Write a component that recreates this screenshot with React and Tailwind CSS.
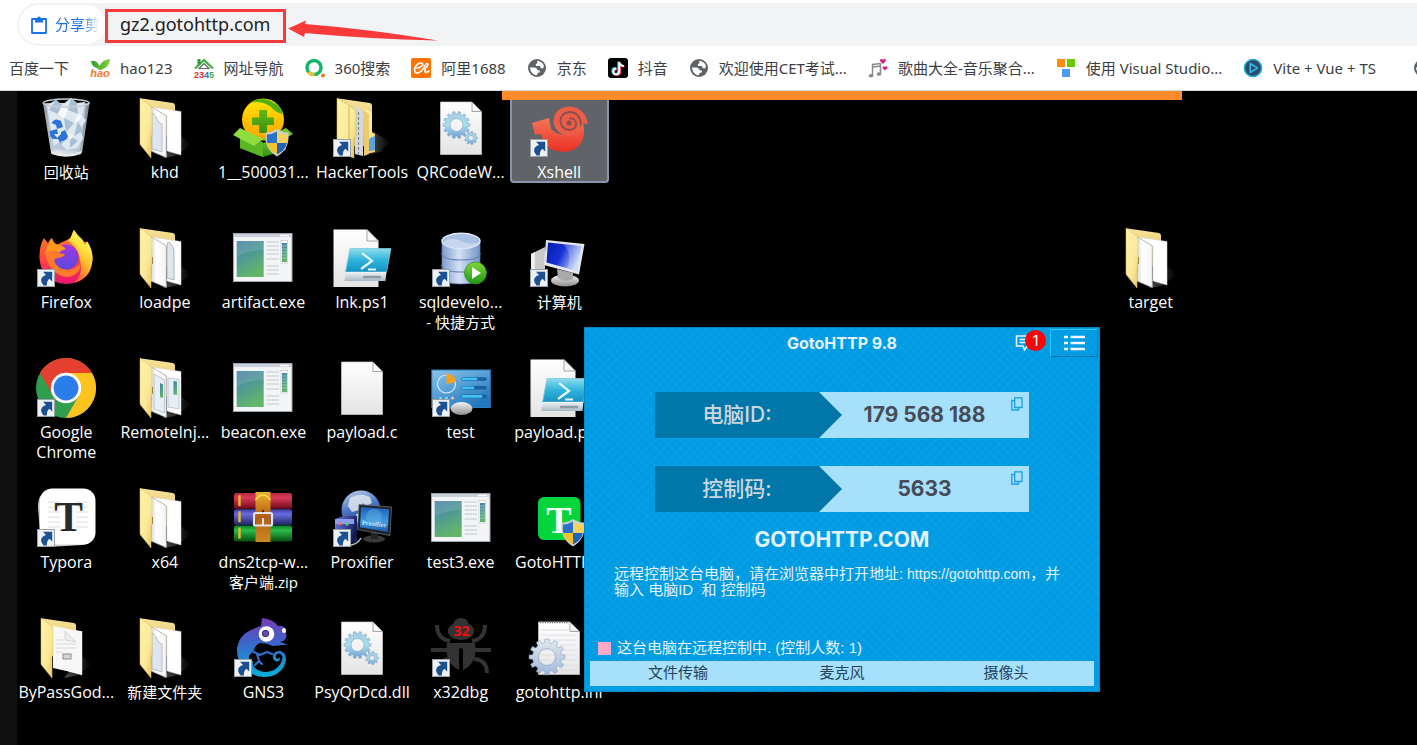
import React from "react";

/* ---------- shared gradients ---------- */

function Gradients() {
  const lin = (id, stops, x2 = 0, y2 = 1) => (
    <linearGradient id={id} x1="0" y1="0" x2={x2} y2={y2}>
      {stops.map(([o, c]) => (
        <stop key={o} offset={o} stopColor={c} />
      ))}
    </linearGradient>
  );
  return (
    <svg className="absolute h-0 w-0" aria-hidden="true">
      <defs>
        {lin("flap", [[0, "#fdf3a6"], [0.6, "#fbe99a"], [1, "#e9c761"]], 1, 1)}
        {lin("back", [[0, "#f7e39a"], [1, "#d9b757"]])}
        {lin("paper", [[0, "#ffffff"], [1, "#e4e4e4"]])}
        {lin("sheet", [[0, "#d9d9d9"], [0.35, "#ffffff"], [1, "#f4f4f4"]], 1, 0)}
        {lin("glow", [[0, "#4a4a4a"], [1, "#000000"]], 1, 0)}
        {lin("app", [[0, "#4a7fa5"], [0.5, "#4f9a93"], [1, "#63b56a"]], 0.4, 1)}
        {lin("gear", [[0, "#a9c9e2"], [0.5, "#a5e0f2"], [1, "#6f9cd0"]])}
        {lin("gearPale", [[0, "#e4e9ee"], [1, "#9fb9d8"]])}
        {lin("bin", [[0, "#8f979e"], [0.3, "#dfe6ec"], [0.7, "#c5ced6"], [1, "#7d858c"]], 1, 0)}
        {lin("ball", [[0, "#ffe600"], [1, "#ffa200"]])}
        {lin("box", [[0, "#7ccd2f"], [1, "#2c8f12"]])}
        {lin("cross", [[0, "#5fb816"], [1, "#3c9310"]])}
        {lin("fox", [[0, "#fff04a"], [0.35, "#ffb02a"], [0.7, "#ff5a36"], [1, "#e3127a"]], -0.4, 1)}
        {lin("foxLeft", [[0, "#ff8a1f"], [0.5, "#ff4a3d"], [1, "#e8156f"]])}
        {lin("globe", [[0, "#a238e0"], [1, "#5a49dd"]])}
        {lin("shell", [[0, "#f4765a"], [1, "#ec2f22"]])}
        {lin("ps", [[0, "#8fdcec"], [0.5, "#2fb3dc"], [1, "#1691c4"]])}
        {lin("psBase", [[0, "#eef4f7"], [1, "#a9b9c4"]])}
        {lin("db", [[0, "#7f9dcb"], [0.45, "#d4e0f4"], [1, "#7393c8"]], 1, 0)}
        {lin("play", [[0, "#7fd63a"], [1, "#1f9a12"]])}
        {lin("screen", [[0, "#0a18a8"], [0.5, "#1531d6"], [1, "#c0d4f8"]], 1, 0.4)}
        {lin("silver", [[0, "#f4f4f4"], [1, "#8d8d8d"]])}
        {lin("panel", [[0, "#8cc6ec"], [1, "#1f78bd"]], 0.7, 1)}
        {lin("red", [[0, "#b3293f"], [0.3, "#d93a58"], [1, "#6f0a1b"]])}
        {lin("blue", [[0, "#3a3d9e"], [0.3, "#6a6ce0"], [1, "#20225f"]])}
        {lin("green", [[0, "#0f7f2a"], [0.3, "#2bbd48"], [1, "#064f14"]])}
        {lin("strap", [[0, "#e7b22d"], [0.5, "#b65a12"], [1, "#c98a24"]])}
        {lin("earth", [[0, "#c8d6ee"], [0.5, "#4f78c4"], [1, "#1b3a96"]], 0.3, 1)}
        {lin("monitor", [[0, "#1d5fb8"], [0.6, "#3f9de0"], [1, "#1a55a8"]])}
        {lin("server", [[0, "#6d7ee8"], [1, "#141a58"]], 1, 0.4)}
        {lin("lizard", [[0, "#7a3bb8"], [0.4, "#3f63c9"], [1, "#06b0d8"]])}
        {lin("leaf", [[0, "#2f9e2c"], [1, "#8ccf3a"]], 1, 0)}
      </defs>
    </svg>
  );
}

/* ---------- desktop icon pieces ---------- */

const Svg = ({ children }) => (
  <svg viewBox="0 0 64 64" className="h-16 w-16 shrink-0" aria-hidden="true">
    {children}
  </svg>
);

const Shortcut = () => (
  <g>
    <rect x="3.5" y="43.5" width="17" height="17" fill="#eef1f4" stroke="#9aa0a6" />
    <path d="M9 45.8H18.2V55.4L15.4 52.8Q12.5 55 12.9 59.6H9.6Q5.6 55 8 51.6Q9.4 49.8 12 49Z" fill="#1d4f93" />
  </g>
);

const Shield = () => (
  <g transform="translate(46 47)">
    <path d="M0 -14Q6 -10 11.5 -10.5Q13 6 0 13.5Q-13 6 -11.5 -10.5Q-6 -10 0 -14Z" fill="#c9ced6" />
    <path d="M0 -11.6V0H-9.9Q-10.4 -5 -10 -8.6Q-5 -8.6 0 -11.6Z" fill="#2a72c8" />
    <path d="M0 -11.6V0H9.9Q10.4 -5 10 -8.6Q5 -8.6 0 -11.6Z" fill="#f7d25a" />
    <path d="M0 11.4V0H-9.9Q-8 8 0 11.4Z" fill="#f4c22e" />
    <path d="M0 11.4V0H9.9Q8 8 0 11.4Z" fill="#1f63ba" />
  </g>
);

function gearPath(cx, cy, r, teeth, depth) {
  const pts = [];
  for (let i = 0; i < teeth; i++) {
    const a = (i / teeth) * Math.PI * 2;
    const s = (Math.PI * 2) / teeth;
    [[-0.3, r - depth], [-0.2, r], [0.2, r], [0.3, r - depth]].forEach(([k, d]) => {
      const t = a + k * s;
      pts.push(`${(cx + Math.cos(t) * d).toFixed(1)} ${(cy + Math.sin(t) * d).toFixed(1)}`);
    });
  }
  return `M${pts.join("L")}Z`;
}

const Gear = ({ cx, cy, r, hole, teeth = 12, depth = 2.5, fill = "url(#gear)" }) => (
  <path
    fillRule="evenodd"
    fill={fill}
    stroke="#7f9fbe"
    strokeWidth="0.6"
    d={`${gearPath(cx, cy, r, teeth, depth)}M${cx - hole} ${cy}a${hole} ${hole} 0 1 0 ${hole * 2} 0a${hole} ${hole} 0 1 0 ${-hole * 2} 0Z`}
  />
);

const Doc = () => (
  <g>
    <path d="M11.5 6H43L52.5 15.5V58.5H11.5Z" fill="url(#paper)" stroke="#cfcfcf" strokeWidth="0.7" />
    <path d="M43 6V15.5H52.5Z" fill="#fafafa" stroke="#8f8f8f" strokeWidth="0.8" />
  </g>
);

/* ---------- desktop icons ---------- */

const RecycleBin = () => (
  <Svg>
    <path d="M9 7L17 57Q32 63 48 57L55.5 7Z" fill="url(#bin)" />
    <path d="M12 8L19 53Q32 56 46 53L52 8Z" fill="#b9cbdb" />
    <path d="M13 9L22 4L28 9L37 2L43 7L51 6L48 20L52 24L46 34L49 42L43 52L33 54L25 46L20 50L17 34L15 22Z" fill="#dde8f1" />
    <path d="M22 4L28 9L24 18L15 14ZM37 2L34 14L44 18L43 7ZM30 22L40 27L32 36ZM44 25L49 35L40 40ZM36 40L44 45L36 52ZM24 40L31 44L26 50Z" fill="#a9bfd3" />
    <path d="M28 9L34 14L30 22L24 18ZM44 18L48 20L44 25L40 27ZM32 36L40 40L36 44Z" fill="#f7fafc" />
    <ellipse cx="32.2" cy="7" rx="23" ry="4" fill="none" stroke="#c8ced3" strokeWidth="1.5" />
    <path d="M17.5 27Q21 21 27 25L29 31L23 33L22 29ZM16 35L23 33L24 38L20 38L24 43L19 43Q15 40 16 35ZM27 36L31 34L34 40Q33 45 27 45L27 47L23 42L27 38Z" fill="#2f72d6" />
    <path d="M17 55Q32 61 47.5 55L47 58Q32 63.5 17.4 58Z" fill="#e6eaed" />
  </Svg>
);

const Folder = ({ variant = "pages" }) => (
  <Svg>
    <path d="M48 40L58 49L42 60L30 62Z" fill="url(#glow)" />
    <path d="M7 2.3L40 7Q42 7.5 42 9.5V40H7Z" fill="url(#back)" />
    <path d="M18 11L48 15.5V59L34 55V20Z" fill="#ffffff" stroke="#d6d6d6" strokeWidth="0.5" />
    {variant === "apps" && (
      <g>
        <path d="M35 22L46 23.5V53L35 51Z" fill="#e8eef5" stroke="#b3bec9" strokeWidth="0.8" />
        <path d="M40.5 25L44 25.5V39L40.5 38.5Z" fill="url(#app)" />
      </g>
    )}
    {variant === "single" ? (
      <g>
        <path d="M19 10L48 15.5V58.5L19 52Z" fill="#f7f7f7" />
        <path d="M31 15L42 26L31 24ZM22 24H29M22 28H42M22 32H42M22 36H28" fill="#ececec" stroke="#c9c9c9" strokeWidth="0.7" />
        <rect x="29" y="38" width="8" height="5" fill="#d5d5d5" stroke="#8d8d8d" />
      </g>
    ) : (
      <path d="M18.5 11L32 19Q33.3 20 33.3 21.5V61.5L18 55Z" fill="url(#sheet)" stroke="#b0b0b0" strokeWidth="0.8" />
    )}
    {variant === "apps" && (
      <g>
        <path d="M21 18L31.5 24V57L21 53Z" fill="#e8eef5" stroke="#b3bec9" strokeWidth="0.8" />
        <path d="M27 27L30 28.5V42L27 41Z" fill="url(#app)" />
      </g>
    )}
    {variant === "pages" && (
      <path d="M19 17Q24 20 25 26L29 28V56L19 53Z" fill="#dfe5ee" stroke="#aab3bd" strokeWidth="0.8" />
    )}
    {variant === "config" && (
      <path d="M35 16Q40 18 41 25V54L34 52V20Z" fill="#dfe5ee" stroke="#9aa3ad" strokeWidth="0.8" />
    )}
    {variant !== "pages" && variant !== "single" && <path d="M19 31V38" stroke="#7a7546" strokeWidth="2" />}
    <path d="M7 2.3L17 9.5Q19 11 19 13.5V38L18 41V62L7.5 49Q7 48 7 47Z" fill="url(#flap)" stroke="#dcc26a" strokeWidth="0.5" />
  </Svg>
);

const ToolsFolder = () => (
  <Svg>
    <path d="M44 36L60 46L50 56L40 58Z" fill="url(#glow)" />
    <path d="M7 2.3L40 7Q42 7.5 42 9.5V50H7Z" fill="url(#back)" />
    <path d="M34 13L42 16V36L45 38V56L35 58Z" fill="url(#flap)" />
    <path d="M40 42L45 40V54L36 56V50Z" fill="#5ba2dc" />
    <path d="M24 10L33 15V60L25 58Z" fill="#d5d8db" />
    <path d="M28.5 16V58" stroke="#7b858f" strokeWidth="1.2" strokeDasharray="3 2" />
    <path d="M7 2.3L17 8L26 14V40L24 42V62L18 60L7 49Z" fill="url(#flap)" stroke="#cdb150" strokeWidth="0.6" />
    <path d="M19 10V60" stroke="#c9a94b" strokeWidth="0.8" />
    <path d="M33.5 14L39 18V58L34 60Z" fill="#eecb6a" />
    <Shortcut />
  </Svg>
);

const Installer = () => (
  <Svg>
    <path d="M9 40L32 47L55 40V54L32 61L9 52Z" fill="url(#box)" />
    <path d="M32 46V61L9 52V39Z" fill="#5cb522" />
    <circle cx="32" cy="23.5" r="21" fill="url(#ball)" />
    <path d="M19 7Q31 -1 43 7Q51 11 52 18Q45 17 40 11Q30 4 19 7Z" fill="#4fb010" />
    <path d="M28 14H36V21.5H43V29H36V37H28V29H21V21.5H28Z" fill="url(#cross)" />
    <path d="M9 32L32 43L23 50L2 39Z" fill="#8fdc3f" />
    <path d="M55 32L32 43L41 50L62 38Z" fill="#6fc728" />
    <Shield />
  </Svg>
);

const QrDoc = () => (
  <Svg>
    <Doc />
    <Gear cx={27.5} cy={29} r={13.5} hole={6.5} teeth={14} />
    <Gear cx={42} cy={42} r={6.5} hole={2.6} teeth={9} depth={1.6} />
  </Svg>
);

const Xshell = () => (
  <Svg>
    <path d="M5 27L22 22L24 33Q31 40 38 38Q53 36 56 25L57 33Q58 46 48 53Q36 59 24 53Q16 47 14 38L8 39Z" fill="url(#shell)" />
    <path d="M26.5 27Q26 12 42 10.5Q58 11 60.8 28L53 27Q54 40 42 40Q29 38 26.5 27Z" fill="#ee5d45" />
    <path d="M54 27Q52 16 42.5 16Q33 17 33.5 26Q35 33.5 43 34Q50 33 49 26.5Q47.5 22 43 22.5" fill="none" stroke="#8a4f4e" strokeWidth="1.8" strokeLinecap="round" />
    <circle cx="42" cy="27" r="2.6" fill="#8a4f4e" />
    <Shortcut />
  </Svg>
);

const Firefox = () => (
  <Svg>
    <path d="M10 12Q12 15 14 17Q15 14 18 12Q19 17 22 19L37 12Q38 6 40 4Q43 9 48 14Q52 17 53 16Q59 24 58.5 34Q57 56 33 58Q8 57 5.5 33Q5 20 10 12Z" fill="url(#foxLeft)" />
    <path d="M40 4Q43 9 48 13L51 19L53 15Q59 24 58.5 34Q57 52 40 57Q50 48 46 34Q45 22 34 15Q38 10 40 4Z" fill="url(#fox)" />
    <circle cx="32" cy="31" r="12.5" fill="url(#globe)" />
    <path d="M11 27Q17 24 24 27L31 28Q29 32 23 32Q19 33 21 37Q25 44 34 44Q44 43 47 35Q47 49 34 51Q16 50 11 27Z" fill="#ff7a2b" />
    <path d="M18 12Q19 17 24 19Q28 19 32 23Q27 24 25 27Q17 23 11 28Q13 20 18 12Z" fill="#ff9a1f" />
    <Shortcut />
  </Svg>
);

const AppWindow = () => (
  <Svg>
    <rect x="2.5" y="7.5" width="58.5" height="48" fill="#f3f4f6" stroke="#9ea6b0" />
    <rect x="3" y="8" width="57.5" height="3" fill="#c9d0da" />
    <path d="M49 9.5H58" stroke="#ffffff" strokeWidth="1.5" />
    <rect x="5.7" y="15" width="27" height="36" fill="url(#app)" />
    <path d="M5.7 31Q16 24 32.7 24V15H5.7Z" fill="#ffffff" opacity="0.12" />
    <path d="M35.5 16H48M35.5 20H48M35.5 24H48M35.5 28H48M35.5 33H48M35.5 40H48M35.5 44H48M35.5 48H48" stroke="#d4d6da" strokeWidth="1.3" />
    <rect x="50" y="14.5" width="6.5" height="22.5" fill="#ffffff" stroke="#c3c8ce" strokeWidth="0.7" />
    <rect x="51" y="17" width="5" height="19" fill="url(#app)" />
    <path d="M51 20H56M51 23H56M51 26H56M51 29H56M51 32H56" stroke="#d5e3e6" strokeWidth="0.5" />
  </Svg>
);

const Script = () => (
  <Svg>
    <path d="M3.5 3.5H37L48.5 15V61H3.5Z" fill="url(#paper)" />
    <path d="M37 3.5V15H48.5Z" fill="#fafafa" stroke="#8f8f8f" strokeWidth="0.8" />
    <path d="M20 22.5H61L56.5 46H15.5Z" fill="url(#ps)" stroke="#7cc8de" strokeWidth="0.8" />
    <path d="M15.5 46H56.5L55.5 55H14.5Z" fill="url(#psBase)" />
    <path d="M34 51H50" stroke="#8e9ba5" strokeWidth="2.5" strokeLinecap="round" />
    <path d="M32 27L42 35L31 43M38 43.5H46" fill="none" stroke="#e8f8fc" strokeWidth="2.2" />
  </Svg>
);

const Database = () => (
  <Svg>
    <path d="M13 15V50Q13 58 32 58Q51 58 51 50V15Z" fill="url(#db)" stroke="#5e7db3" strokeWidth="0.7" />
    <path d="M13 27Q13 34 32 34Q51 34 51 27M13 39Q13 46 32 46Q51 46 51 39" fill="none" stroke="#6886ba" strokeWidth="1.2" />
    <ellipse cx="32" cy="15" rx="19" ry="7.7" fill="#a9c0e2" stroke="#dfe8f6" strokeWidth="1.4" />
    <path d="M14 16Q22 10 32 15Q42 20 50 16Q46 22 32 22.5Q18 22 14 16Z" fill="#d3e0f3" opacity="0.7" />
    <circle cx="46.5" cy="47" r="11" fill="url(#play)" stroke="#2a8a1a" strokeWidth="0.7" />
    <path d="M43 41L52 47L43 53Z" fill="#ffffff" />
    <Shortcut />
  </Svg>
);

const Computer = () => (
  <Svg>
    <path d="M4 28L18 21V45H4Z" fill="#c9c9c9" />
    <path d="M4 28L8 26V45H4Z" fill="#eeeeee" />
    <ellipse cx="38" cy="54.5" rx="14" ry="6" fill="url(#silver)" />
    <path d="M30 43L46 47V53Q38 57 31 52Z" fill="#a9a9a9" />
    <path d="M19 14L57.5 18L52 48.5L17 39Z" fill="#e5e7ea" />
    <path d="M21 16.5L54.5 20L50 45L19.5 36.5Z" fill="url(#screen)" />
    <path d="M36 18L54.5 20L50 45L40 42Q46 28 36 18Z" fill="#ffffff" opacity="0.2" />
    <Shortcut />
  </Svg>
);

const Chrome = () => (
  <Svg>
    <circle cx="32" cy="32" r="30" fill="#2f9e4f" />
    <path d="M32 32L6 17A30 30 0 0 1 58 17Z" fill="#e5402f" />
    <path d="M19 39.5L6 17A30 30 0 0 1 12 10L32 17Z" fill="#e5402f" />
    <path d="M32 17H58A30 30 0 0 1 32 62L45 39.5Z" fill="#fcc31e" />
    <circle cx="32" cy="32" r="15.2" fill="#ffffff" />
    <circle cx="32" cy="32" r="12.4" fill="#2b7de9" />
    <Shortcut />
  </Svg>
);

const PlainDoc = () => (
  <Svg>
    <Doc />
  </Svg>
);

const ControlPanel = () => (
  <Svg>
    <rect x="2.8" y="14" width="58.5" height="37.5" fill="url(#panel)" stroke="#2e7fbf" />
    <circle cx="17.5" cy="28" r="9" fill="none" stroke="#d8ecf8" strokeWidth="1.2" />
    <path d="M17.5 28V17.5Q26 18 27 26Z" fill="#f5a11c" />
    {[23, 31.7, 40.4].map((y, i) => (
      <g key={y}>
        <path d={`M34 ${y}H56`} stroke="#1c5f9d" strokeWidth="3.6" strokeLinecap="round" />
        <path d={`M34 ${y}H${[47, 44, 52][i]}`} stroke="#3fc3f7" strokeWidth="2.6" strokeLinecap="round" />
      </g>
    ))}
    <circle cx="11.5" cy="42" r="1.3" fill="#7fe3f7" />
    <circle cx="17.5" cy="42" r="1.3" fill="#7fe3f7" />
    <circle cx="23.5" cy="42" r="1.5" fill="#ffc670" />
    <ellipse cx="32.5" cy="52.5" rx="11" ry="6.5" fill="url(#silver)" />
    <Shortcut />
  </Svg>
);

const Typora = () => (
  <Svg>
    <path d="M4 20Q4 9 12 5L57 50Q58 58 48 59L14 61Q8 60 6 50Z" fill="#cfcfcf" />
    <rect x="6" y="2.5" width="55.5" height="56" rx="12" fill="#ffffff" />
    <path d="M14 16H26M14 21H26M14 26H26M14 31H26M14 36H26M14 41H26M42 16H54M42 21H54M42 26H54M42 31H54M42 36H54M42 41H54" stroke="#dcdcdc" strokeWidth="1.2" />
    <text x="34.5" y="45" textAnchor="middle" fontSize="43" fontWeight="700" fontFamily="Liberation Serif, serif" fill="#2b2b2b">T</text>
    <Shortcut />
  </Svg>
);

const Archive = () => (
  <Svg>
    {["url(#red)", "url(#blue)", "url(#green)"].map((f, i) => (
      <g key={f}>
        <rect x="3" y={7 + i * 16.3} width="58" height="15.8" rx="2" fill={f} />
        <path d={`M8.5 ${9 + i * 16.3}v11`} stroke="#e8b830" strokeWidth="2.4" />
      </g>
    ))}
    <rect x="24.5" y="6" width="15" height="50" fill="url(#strap)" />
    <path d="M24.5 14Q32 4 39.5 14" fill="none" stroke="#f7dc5a" strokeWidth="1.5" />
    <rect x="23" y="27" width="18" height="12.5" rx="1.5" fill="none" stroke="#e2e4e8" strokeWidth="2.2" />
    <path d="M32 32V39" stroke="#f4f4f4" strokeWidth="1.8" />
    <circle cx="32" cy="25" r="1.2" fill="#5a2c08" />
  </Svg>
);

const Proxifier = () => (
  <Svg>
    <circle cx="31" cy="24" r="19.5" fill="url(#earth)" />
    <path d="M20 12Q30 6 40 11L42 17L36 20L33 17L29 24L22 26L18 20ZM26 28L34 27L36 36L28 40Z" fill="#dde6f0" opacity="0.85" />
    <path d="M5 33L14 30H27V56L16 58L5 53Z" fill="url(#server)" />
    <path d="M5 33H24V38H5Z" fill="#8d9cf0" />
    <circle cx="10" cy="37.5" r="1.5" fill="#ff7a4a" />
    <circle cx="17" cy="38" r="1.5" fill="#4adf5a" />
    <ellipse cx="44" cy="53" rx="11" ry="3.5" fill="#3a3a3a" />
    <path d="M41 45H48V53H41Z" fill="#222222" />
    <path d="M29 18.5L61.5 21L60 49.5L27.5 43.5Z" fill="#20242a" stroke="#6f7780" strokeWidth="0.7" />
    <path d="M31 21L59 23.3L57.8 46L30 41.3Z" fill="url(#monitor)" />
    <circle cx="44" cy="31" r="8" fill="#6db8ec" opacity="0.4" />
    <text x="44" y="40" textAnchor="middle" fontSize="6.5" fontWeight="700" fontFamily="Liberation Serif, serif" fill="#cfe4f5" transform="rotate(6 44 40)">Proxifier</text>
    <path d="M21 59Q28 58 31 52" fill="none" stroke="#bfc5cc" strokeWidth="1.5" />
    <Shortcut />
  </Svg>
);

const GotoIcon = () => (
  <Svg>
    <rect x="11" y="11" width="42.5" height="43" rx="6" fill="#05d53d" />
    <text x="32" y="47" textAnchor="middle" fontSize="38" fontWeight="700" fontFamily="Liberation Serif, serif" fill="#f2fff2">T</text>
    <Shield />
  </Svg>
);

const Gns3 = () => (
  <Svg>
    <path
      d="M31 2Q42 3 47 10Q53 9 54.5 14L55.5 20Q55 25 49 26L57 28.5L42 30Q36 27 29 27Q24 29 23 34L18 40Q17 45 22 45Q21 51 27 54Q34 58 43 54Q51 49 51.5 41Q50 36 46 38Q43.5 40 45.5 42.5Q48 43.5 49 41Q49.5 45.5 45.5 45.5Q41 44 42 39Q44 34.5 49.5 35Q55.5 37 55 44Q53 56 41 60Q26 63.5 15 54Q5 44 6 32Q8 20 18 15Q26 11 30 10Z"
      fill="url(#lizard)"
    />
    <path d="M24 27L21 35L29 39L36 36L41 38M26 38L28 45L24 49M28 45L31 48" fill="none" stroke="#2f6fc8" strokeWidth="2.2" strokeLinecap="round" strokeLinejoin="round" />
    <circle cx="35.5" cy="18" r="7.8" fill="#ffffff" />
    <circle cx="34.5" cy="17.5" r="3.2" fill="#5c4fc0" stroke="#2c2550" strokeWidth="1" />
    <ellipse cx="53" cy="14.5" rx="2" ry="2.6" fill="#ffffff" />
    <Shortcut />
  </Svg>
);

const Bug = () => (
  <Svg>
    <g fill="none" stroke="#333333" strokeWidth="4">
      <path d="M8 9Q8 23 21 25M56 9Q56 23 43 25M2 34H18M46 34H62M45 43Q58 44 58 57M19 43Q8 46 8 57" />
    </g>
    <path d="M24 8Q26 2 32 2Q38 2 40 8Q46 11 45 17Q43 23 32 24Q21 23 19 17Q18 11 24 8Z" fill="#333333" />
    <path d="M18 27H46Q49 47 34 54V34Q32 29 30 34V54Q15 47 18 27Z" fill="#333333" />
    <text x="32.5" y="20" textAnchor="middle" fontSize="14" fontWeight="700" fontFamily="Noto Sans, sans-serif" fill="#f20d0d">32</text>
    <Shortcut />
  </Svg>
);

const IniDoc = () => (
  <Svg>
    <Doc />
    <path d="M13 6H42" stroke="#6b6b6b" strokeWidth="2.5" strokeDasharray="1.2 1.2" />
    <path d="M14 14H50M14 19H50M14 24H50M14 29H50M14 34H50M14 39H50M14 44H50M14 49H50M14 54H50" stroke="#d5dbe4" strokeWidth="0.8" />
    <Gear cx={20} cy={41} r={18} hole={8.5} teeth={12} depth={3.5} fill="url(#gearPale)" />
  </Svg>
);

/* ---------- bookmark icons ---------- */

const Fav = ({ children }) => (
  <svg viewBox="0 0 20 20" className="h-5 w-5 shrink-0" aria-hidden="true">
    {children}
  </svg>
);

const HaoFav = () => (
  <Fav>
    <path d="M1 3Q7 2 9.5 8Q12 2 20 1Q20 9 11 12Q8 12 7 10Q2 9 1 3Z" fill="url(#leaf)" />
    <text x="10" y="18.5" textAnchor="middle" fontSize="11" fontWeight="700" fontStyle="italic" fontFamily="Liberation Sans, sans-serif" fill="#f47a1f">hao</text>
  </Fav>
);

const NavFav = () => (
  <Fav>
    <path d="M1 10.5L10 2L19 10.5" fill="none" stroke="#3fae3f" strokeWidth="2.2" />
    <path d="M3.5 1H6.5V5L3.5 8Z" fill="#2f9a3a" />
    <path d="M10 5.5L15 10.5H5Z" fill="none" stroke="#5b6a6a" strokeWidth="1.2" />
    <text x="10" y="19.5" textAnchor="middle" fontSize="9" fontWeight="700" fontFamily="Liberation Sans, sans-serif">
      <tspan fill="#e02f2f">2</tspan>
      <tspan fill="#e02f2f">3</tspan>
      <tspan fill="#2f6fd0">4</tspan>
      <tspan fill="#3fae3f">5</tspan>
    </text>
  </Fav>
);

const SearchFav = () => (
  <Fav>
    <circle cx="9" cy="9.5" r="7" fill="none" stroke="#13b569" strokeWidth="3.4" />
    <path d="M3.5 14A7 7 0 0 0 9.5 16.5" fill="none" stroke="#f2c12e" strokeWidth="3.4" />
    <circle cx="18" cy="17.5" r="2" fill="#f5781e" />
  </Fav>
);

const AliFav = () => (
  <Fav>
    <rect width="20" height="20" rx="2" fill="#ff7300" />
    <path d="M4 10Q8 11 11.5 7.5Q12.5 4.5 9 5Q4.5 6.5 3.5 11.5Q3.5 15.5 7 15Q10 14 12 11Q14 7 15.5 5.5Q17.8 5.5 16.5 8Q15 10 13 10.5Q15 11 13.8 13.5Q14.5 15.5 18 13" fill="none" stroke="#ffffff" strokeWidth="1.6" strokeLinecap="round" strokeLinejoin="round" />
  </Fav>
);

const GlobeFav = () => (
  <Fav>
    <circle cx="10" cy="10" r="9" fill="#5f6368" />
    <path d="M10 2.8Q15 3 17 8L16 10.5L13.5 10L13 8H9.5L8.5 6.5L10.5 5Z" fill="#ffffff" />
    <path d="M2.9 9.5L7 9.5Q10 9.5 10.5 12L13 12.8L12.5 14.5L10.5 15L10 17.2Q4 17 2.9 9.5Z" fill="#ffffff" />
  </Fav>
);

const TikFav = () => (
  <Fav>
    <rect width="20" height="20" rx="3" fill="#000000" />
    <g fill="none" strokeWidth="2.2">
      <path d="M10.5 3.5V13A3 3 0 1 1 7.5 10M10.5 4Q11.5 7.5 15 7.5" stroke="#25f4ee" />
      <path d="M12 4.5V14A3 3 0 1 1 9 11M12 5Q13 8.5 16.5 8.5" stroke="#fe2c55" />
      <path d="M11.3 4V13.5A3 3 0 1 1 8.3 10.5M11.3 4.5Q12.3 8 15.8 8" stroke="#ffffff" strokeWidth="1.8" />
    </g>
  </Fav>
);

const MusicFav = () => (
  <Fav>
    <path d="M4.5 17.5V6.5L12.5 5.5V15.5M4.5 9L12.5 8" fill="none" stroke="#8a8a8a" strokeWidth="1.5" />
    <ellipse cx="3" cy="17.8" rx="2.4" ry="1.7" fill="#8a8a8a" />
    <ellipse cx="11" cy="16" rx="2.4" ry="1.7" fill="#8a8a8a" />
    <path d="M15 6L12 3Q12 .5 13.5 1Q15 1 15 2Q15.5 .8 17 1Q18.5 1.5 17.8 3Z" fill="#d81f7b" />
    <path d="M17 12.5L14.5 10Q14.5 8 16 8.2Q17 8.5 17 9.2Q17.5 8 19 8.5Q20 9.5 19.5 10.2Z" fill="#d81f7b" />
  </Fav>
);

const BlocksFav = () => (
  <Fav>
    <rect x="1" y="1" width="8" height="8" fill="#ff8c00" />
    <rect x="11" y="1" width="8" height="8" fill="#6bc800" />
    <rect x="6" y="11" width="8" height="8" fill="#4c9bf5" />
  </Fav>
);

const ViteFav = () => (
  <Fav>
    <circle cx="10" cy="10" r="8.5" fill="#2f4a68" stroke="#1ea7d6" strokeWidth="1.6" />
    <path d="M7.2 5.5L14.5 10L7.2 14.5Z" fill="none" stroke="#2bb5e8" strokeWidth="1.6" strokeLinejoin="round" />
  </Fav>
);

const bookmarks = [
  { label: "百度一下" },
  { label: "hao123", Icon: HaoFav },
  { label: "网址导航", Icon: NavFav },
  { label: "360搜索", Icon: SearchFav },
  { label: "阿里1688", Icon: AliFav },
  { label: "京东", Icon: GlobeFav },
  { label: "抖音", Icon: TikFav },
  { label: "欢迎使用CET考试...", Icon: GlobeFav },
  { label: "歌曲大全-音乐聚合...", Icon: MusicFav },
  { label: "使用 Visual Studio...", Icon: BlocksFav },
  { label: "Vite + Vue + TS", Icon: ViteFav },
];

const rows = [
  [
    { label: "回收站", Icon: RecycleBin },
    { label: "khd", Icon: Folder },
    { label: "1__500031...", Icon: Installer },
    { label: "HackerTools", Icon: ToolsFolder },
    { label: "QRCodeW...", Icon: QrDoc },
    { label: "Xshell", Icon: Xshell, selected: true },
  ],
  [
    { label: "Firefox", Icon: Firefox },
    { label: "loadpe", Icon: Folder, variant: "config" },
    { label: "artifact.exe", Icon: AppWindow },
    { label: "lnk.ps1", Icon: Script },
    { label: "sqldevelo...\n- 快捷方式", Icon: Database },
    { label: "计算机", Icon: Computer },
    { label: "target", Icon: Folder, variant: "plain", last: true },
  ],
  [
    { label: "Google\nChrome", Icon: Chrome },
    { label: "RemoteInj...", Icon: Folder, variant: "apps" },
    { label: "beacon.exe", Icon: AppWindow },
    { label: "payload.c", Icon: PlainDoc },
    { label: "test", Icon: ControlPanel },
    { label: "payload.ps1", Icon: Script },
  ],
  [
    { label: "Typora", Icon: Typora },
    { label: "x64", Icon: Folder, variant: "plain" },
    { label: "dns2tcp-w...\n客户端.zip", Icon: Archive },
    { label: "Proxifier", Icon: Proxifier },
    { label: "test3.exe", Icon: AppWindow },
    { label: "GotoHTTP...", Icon: GotoIcon },
  ],
  [
    { label: "ByPassGod...", Icon: Folder, variant: "single" },
    { label: "新建文件夹", Icon: Folder },
    { label: "GNS3", Icon: Gns3 },
    { label: "PsyQrDcd.dll", Icon: QrDoc },
    { label: "x32dbg", Icon: Bug },
    { label: "gotohttp.ini", Icon: IniDoc },
  ],
];

const hasHan = (text) => /[\u4e00-\u9fff]/.test(text);

function Tile({ label, Icon, variant, selected, last }) {
  return (
    <button
      type="button"
      className={
        "flex flex-col items-center self-start pb-px text-center leading-5 whitespace-nowrap text-white " +
        (selected ? "rounded-sm bg-[#606367] outline-2 -outline-offset-2 outline-[#8796ae] " : "") +
        (last ? "col-start-12" : "")
      }
    >
      <Icon variant={variant} />
      <span className="pt-0.5">
        {label.split("\n").map((line) => (
          <span key={line} className={hasHan(line) ? "block text-[15px] leading-5" : "block text-[16px] leading-5"}>
            {line}
          </span>
        ))}
      </span>
    </button>
  );
}

function BrowserBar() {
  return (
    <header className="bg-white">
      <div className="relative pt-[3px] pl-[17px]">
        <div className="flex h-[43px] items-center rounded-l-full bg-[#f1f3f4] p-0.5">
          <button
            type="button"
            className="flex h-[39px] w-[87px] shrink-0 items-center gap-2 rounded-full bg-white pl-3 text-[15px] text-[#1a73e8]"
          >
            <svg viewBox="0 0 16 18" className="h-[18px] w-4 shrink-0" aria-hidden="true">
              <path d="M1 3H15V17H1Z" fill="none" stroke="#1a73e8" strokeWidth="1.8" strokeLinejoin="round" />
              <path d="M4 2.5H6Q6.5 .5 8 .5Q9.5 .5 10 2.5H12V6.5H4Z" fill="#1a73e8" />
            </svg>
            <span className="[mask-image:linear-gradient(to_right,#000_60%,transparent)] whitespace-nowrap">分享剪</span>
          </button>
          <input
            type="text"
            aria-label="地址"
            defaultValue="gz2.gotohttp.com"
            className="ml-3.5 h-full min-w-0 flex-1 bg-transparent pb-0.5 text-[18px] text-[#202124] outline-none"
          />
        </div>
        <div className="pointer-events-none absolute top-[9px] left-[105px] h-[34px] w-[181px] border-[3px] border-[#f93a3a]" />
        <svg viewBox="0 0 150 22" className="pointer-events-none absolute top-5 left-72 h-[22px] w-[150px]" aria-hidden="true">
          <path d="M0 8.5L18 0.5L17 4Q80 9 150 20.5Q80 19 17 13L16 17Z" fill="#f93a3a" />
        </svg>
      </div>
      <nav className="flex h-[45px] items-center gap-[21px] overflow-hidden border-b border-[#d5d8da] pl-[9px] text-[15px] text-[#3c4043]">
        {bookmarks.map(({ label, Icon }) => (
          <a key={label} href="#" className="flex shrink-0 items-center gap-2.5 whitespace-nowrap">
            {Icon && <Icon />}
            {label}
          </a>
        ))}
        <a href="#" aria-label="更多书签" className="shrink-0 pl-4">
          <GlobeFav />
        </a>
      </nav>
    </header>
  );
}

function CodeBar({ label, value }) {
  return (
    <div className="flex h-[46px] bg-[#a6e0fa]">
      <div className="flex w-[187px] items-center justify-center bg-[#0077a8] pr-[23px] text-[21px] font-medium text-[#cbd6df] [clip-path:polygon(0_0,164px_0,100%_50%,164px_100%,0_100%)]">
        {label}
      </div>
      <div className="relative flex flex-1 items-center justify-center pr-[22px] text-[21px] font-bold text-[#454b57]">
        {value}
        <button type="button" aria-label={"复制" + label} className="absolute top-[5px] right-[6px]">
          <svg viewBox="0 0 12 14" className="h-3.5 w-3" fill="none" stroke="#1aa0e4" strokeWidth="1.3" aria-hidden="true">
            <path d="M3.7 .8H11V10.5H3.7Z" />
            <path d="M3.7 3.5H.8V13H7.5V10.5" />
          </svg>
        </button>
      </div>
    </div>
  );
}

function GotoWindow() {
  return (
    <section className="w-[516px] bg-[#009be2] bg-[repeating-linear-gradient(45deg,#20b0ee40_0_1px,transparent_1px_6px),repeating-linear-gradient(-45deg,#20b0ee40_0_1px,transparent_1px_6px)] px-1.5 pb-1.5 font-['Inter','Noto_Sans_CJK_SC',sans-serif] text-[#e4f2fc] shadow-[inset_0_0_0_1px_#0488c6]">
      <div className="grid h-8 grid-cols-[1fr_auto_1fr] items-center">
        <h2 className="col-start-2 text-base font-bold">GotoHTTP 9.8</h2>
        <div className="-mr-1 flex items-center justify-end gap-1">
          <button type="button" aria-label="消息" className="flex items-center">
            <svg viewBox="0 0 16 16" className="h-4 w-4" fill="none" stroke="#eaf6fd" strokeWidth="1.5" aria-hidden="true">
              <path d="M15 1H1.5V11H8L9.5 15L12 11H15M4.5 4.5H15M4.5 7.5H15" />
            </svg>
            <span className="z-10 mb-1.5 -ml-1.5 flex h-[21px] w-[21px] items-center justify-center rounded-full bg-[#fa0505] text-[15px] leading-none text-white">1</span>
          </button>
          <button
            type="button"
            aria-label="菜单"
            className="flex h-7 w-12 items-center justify-center border border-t-[#2fc6f8] border-r-[#0673a8] border-b-[#0673a8] border-l-[#2fc6f8]"
          >
            <svg viewBox="0 0 21 16" className="h-4 w-[21px]" stroke="#f1f8fd" strokeWidth="2.6" aria-hidden="true">
              <path d="M0 2H4M6.5 2H21M0 8H4M6.5 8H21M0 14H4M6.5 14H21" />
            </svg>
          </button>
        </div>
      </div>
      <div className="mx-[65px] mt-[33px] flex flex-col gap-7">
        <CodeBar label="电脑ID:" value="179 568 188" />
        <CodeBar label="控制码:" value="5633" />
      </div>
      <p className="mt-3.5 text-center text-[21px] leading-7 font-bold">GOTOHTTP.COM</p>
      <p className="mt-3 ml-6 font-['Liberation_Sans','Noto_Sans_CJK_SC',sans-serif] text-[15px] leading-4 whitespace-nowrap">
        远程控制这台电脑，请在浏览器中打开地址:<span className="text-[14px]"> https://gotohttp.com</span>，并
        <br />
        输入 电脑ID&nbsp; 和 控制码
      </p>
      <p className="mt-10 ml-2 flex items-center gap-1.5 font-['Liberation_Sans','Noto_Sans_CJK_SC',sans-serif] text-[15px] leading-5">
        <span className="h-[13px] w-[13px] bg-[#ffabc8]" />
        这台电脑在远程控制中. (控制人数: 1)
      </p>
      <div className="mt-[3px] grid h-[25px] grid-cols-3 bg-[#a6e0fa] px-1.5 text-[15px] text-[#27435a]">
        <button type="button">文件传输</button>
        <button type="button">麦克风</button>
        <button type="button">摄像头</button>
      </div>
    </section>
  );
}

export default function App() {
  return (
    <div className="flex min-h-screen flex-col overflow-hidden bg-black font-['Noto_Sans','Noto_Sans_CJK_SC',sans-serif]">
      <Gradients />
      <BrowserBar />
      <main className="relative flex-1 border-l-[17px] border-[#111111] bg-black font-['Open_Sans','Noto_Sans_CJK_SC',sans-serif]">
        <div className="w-[1183px] pt-[5px]">
          {rows.map((row, i) => (
            <div key={i} className={i < rows.length - 1 ? "grid h-[130px] grid-cols-12" : "grid grid-cols-12"}>
              {row.map((item) => (
                <Tile key={item.label} {...item} />
              ))}
            </div>
          ))}
        </div>
        <div className="absolute top-0 left-[485px] h-[9px] w-[680px] bg-[#ff8c2b]" />
        <div className="absolute top-[236px] left-[567px]">
          <GotoWindow />
        </div>
      </main>
    </div>
  );
}
